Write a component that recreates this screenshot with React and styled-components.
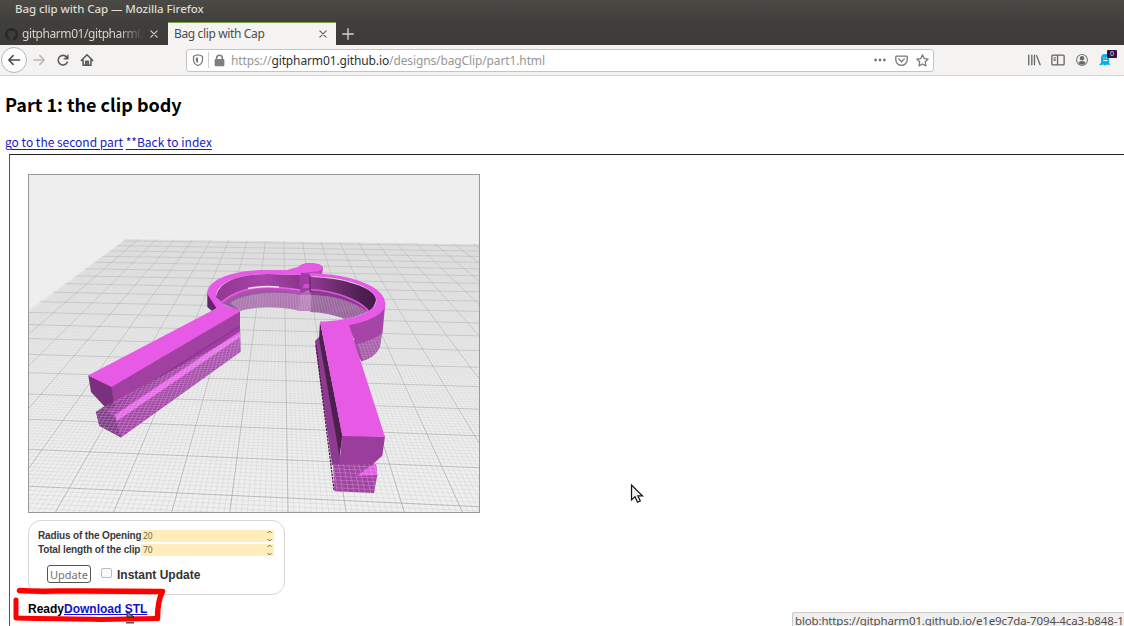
import React from "react";
import styled, { createGlobalStyle } from "styled-components";

const GlobalStyle = createGlobalStyle`
  html, body { margin: 0; padding: 0; background: #fff; overflow: hidden; }
  * { box-sizing: border-box; }
`;

const Window = styled.div`
  position: relative;
  width: 1124px;
  height: 626px;
  overflow: hidden;
  display: flex;
  flex-direction: column;
  background: #fff;
  font-family: "Noto Sans", sans-serif;
`;

const TitleBar = styled.header`
  height: 22px;
  flex: none;
  padding: 0 15px;
  background: linear-gradient(#4b4a45, #403f3b);
  color: #dfdbd2;
  font-size: 11.5px;
  font-weight: 500;
  line-height: 17px;
  letter-spacing: -0.07px;
  white-space: nowrap;
`;

const TabStrip = styled.nav`
  height: 23px;
  flex: none;
  display: flex;
  background: linear-gradient(#403f3b, #3c3b37);
`;

const Tab = styled.div`
  width: ${(p) => p.$width}px;
  display: flex;
  align-items: center;
  padding: ${(p) => (p.$active ? "0 8px 0 6px" : "0 9px 0 5px")};
  background: ${(p) => (p.$active ? "#f5f4f3" : "transparent")};
  border-top: 1px solid ${(p) => (p.$active ? "#78a043" : "transparent")};
  color: ${(p) => (p.$active ? "#4c4c4c" : "#d5d2ca")};
`;

const TabLabel = styled.span`
  flex: 1;
  overflow: hidden;
  white-space: nowrap;
  font-size: 12px;
  line-height: 20px;
  letter-spacing: ${(p) => p.$track};
  margin-left: ${(p) => p.$indent || 0}px;
  margin-right: ${(p) => (p.$fade ? 2 : 8)}px;
  mask-image: ${(p) => (p.$fade ? "linear-gradient(to right, #000 78%, transparent 97%)" : "none")};
`;

const NewTab = styled.div`
  display: flex;
  align-items: center;
  padding-left: 6px;
`;

const Toolbar = styled.div`
  height: 31px;
  flex: none;
  display: flex;
  align-items: center;
  background: #f4f3f2;
  border-bottom: 1px solid #d4d3d2;
`;

const NavButtons = styled.div`
  width: 186px;
  display: flex;
  align-items: center;
`;

const BackButton = styled.div`
  width: 26px;
  height: 26px;
  margin-left: 1px;
  border: 1px solid #b6b5b4;
  border-radius: 50%;
  background: #fdfdfd;
  display: flex;
  align-items: center;
  justify-content: center;
`;

const NavIcon = styled.div`
  width: 24px;
  display: flex;
  justify-content: center;
`;

const UrlBar = styled.div`
  width: 748px;
  height: 23px;
  display: flex;
  align-items: center;
  padding: 0 4px 0 5px;
  border: 1px solid #c6c5c4;
  border-radius: 3px;
  background: #fff;
`;

const Divider = styled.div`
  width: 1px;
  height: 16px;
  margin: 0 4px;
  background: #cdcdcd;
`;

const Url = styled.div`
  flex: 1;
  margin-left: 5px;
  padding-top: 1px;
  font-size: 12px;
  line-height: 18px;
  letter-spacing: -0.12px;
  color: #979797;
  white-space: nowrap;
  b { font-weight: 400; color: #303030; }
`;

const PageActions = styled.div`
  display: flex;
  align-items: center;
  gap: 8px;
`;

const Extensions = styled.div`
  flex: 1;
  display: flex;
  align-items: center;
  justify-content: flex-end;
  gap: 10px;
  padding-right: 11px;
`;

const ExtensionSlot = styled.div`
  position: relative;
  width: 14px;
  height: 14px;
  display: flex;
`;

const Badge = styled.span`
  position: absolute;
  left: 8px;
  top: -3px;
  width: 10px;
  height: 8px;
  background: #3a1140;
  color: #e8dcea;
  border-radius: 1px;
  font-size: 7px;
  line-height: 8px;
  text-align: center;
`;

const Page = styled.main`
  flex: 1;
  padding: 15px 0 0 5px;
  font-family: "Noto Sans CJK JP", "Noto Sans", sans-serif;
`;

const Heading = styled.h1`
  margin: 0;
  height: 26px;
  font-size: 18px;
  line-height: 26px;
  font-weight: 700;
  color: #000;
`;

const Links = styled.p`
  margin: 14px 0 0;
  height: 23px;
  font-size: 12px;
  line-height: 22px;
  white-space: nowrap;
`;

const Anchor = styled.a`
  color: #1a1ac4;
  text-decoration: underline;
  text-underline-offset: 2px;
  text-decoration-thickness: 1px;
`;

const Viewer = styled.section`
  margin-left: 4px;
  height: 480px;
  padding: 19px 0 0 18px;
  border-top: 1px solid #222;
  border-left: 1px solid #555;
  font-family: "Liberation Sans", sans-serif;
`;

const Canvas = styled.div`
  width: 452px;
  height: 339px;
  border: 1px solid #999;
  background: #eee;
  svg { display: block; }
`;

const Controls = styled.form`
  width: 257px;
  height: 75px;
  margin-top: 7px;
  padding: 9px 9px 0;
  border: 1px solid #d6d6d6;
  border-radius: 13px;
`;

const ParamRow = styled.label`
  display: flex;
  height: 13px;
  margin-bottom: 1px;
  color: #3a3a3a;
`;

const ParamName = styled.span`
  width: 103px;
  font-size: 10px;
  line-height: 12px;
  letter-spacing: -0.15px;
  font-weight: 700;
  text-align: right;
  padding-right: 1px;
  white-space: nowrap;
`;

const ParamField = styled.span`
  width: 133px;
  height: 12px;
  display: flex;
  justify-content: space-between;
  align-items: center;
  padding: 0 1px 0 2px;
  background: #ffeebb;
  color: #6e6650;
  font-family: "Noto Sans", sans-serif;
  font-size: 8.5px;
  line-height: 12px;
`;

const Actions = styled.div`
  display: flex;
  align-items: center;
  height: 20px;
  margin-top: 7px;
  padding-left: 9px;
`;

const UpdateButton = styled.span`
  width: 44px;
  height: 18px;
  border: 1px solid #555;
  border-radius: 3px;
  color: #707070;
  font-family: "Noto Sans", sans-serif;
  font-size: 11px;
  line-height: 17px;
  text-align: center;
`;

const CheckBox = styled.span`
  width: 11px;
  height: 10px;
  margin: 0 5px 3px 10px;
  border: 1px solid #bbb;
  border-radius: 2px;
  background: #fafafa;
`;

const CheckLabel = styled.span`
  padding-top: 1px;
  font-size: 12px;
  font-weight: 700;
  color: #333;
`;

const Status = styled.div`
  margin-top: 7px;
  font-size: 12px;
  line-height: 15px;
  font-weight: 700;
  color: #000;
  a { color: #1111cc; text-underline-offset: 1px; }
`;

const LinkPreview = styled.div`
  position: absolute;
  left: 792px;
  top: 612px;
  width: 332px;
  height: 14px;
  padding-left: 2px;
  border: 1px solid #c8c8c8;
  border-width: 1px 0 0 1px;
  border-radius: 3px 0 0 0;
  background: #f0efee;
  color: #505050;
  font-size: 11.5px;
  line-height: 16px;
  letter-spacing: -0.15px;
  white-space: nowrap;
`;

const Overlay = styled.svg`
  position: absolute;
  left: ${(p) => p.$left}px;
  top: ${(p) => p.$top}px;
`;

/* Perspective floor grid */
const VANISH = { x: 282, y: 115 };
const SIDE = { x: -7900, y: 126 };
const columnLine = (i) => ({ x1: VANISH.x, y1: VANISH.y, x2: 288 + i * 58 + (6 + i * 58) * 0.8, y2: 828 });
const rowLine = (k) => {
  const y = 115 + 1 / (0.002611 + k * 0.000288);
  const slope = (y - SIDE.y) / (288 - SIDE.x);
  return { x1: 0, y1: y - 288 * slope, x2: 500, y2: y + 212 * slope };
};
const range = (a, b, step) => Array.from({ length: Math.round((b - a) / step) + 1 }, (_, n) => a + n * step);

function Floor() {
  return (
    <g clipPath="url(#floor)">
      <path d="M126 239L480 244V513H0V334Z" fill="url(#floorShade)" />
      <g stroke="url(#minorLine)" strokeWidth=".45">
        {range(-9, 15, 0.1).map((i) => <line key={"c" + i} {...columnLine(i)} />)}
        {range(-1, 18.3, 0.1).map((k) => <line key={"r" + k} {...rowLine(k)} />)}
      </g>
      <g stroke="url(#majorLine)" strokeWidth=".8">
        {range(-9, 15, 1).map((i) => <line key={"C" + i} {...columnLine(i)} />)}
        {range(-1, 18, 1).map((k) => <line key={"R" + k} {...rowLine(k)} />)}
      </g>
    </g>
  );
}

function ClipModel() {
  return (
    <g>
      {/* knob and ring */}
      <path d="M287 270.5L299 267Q301 263 311 263Q323 264 323 268L322 274L310 277L299 274Z" fill="#b548b5" />
      <path d="M287 270L298 267Q302 263 311 263Q323 264 323 268Q321 272 311 272L302 273Z" fill="#e65ae6" />
      <path d="M207.3 293L207.3 307L212 311L222 305L216 296Z" fill="#63266b" />
      <path d="M382.3 332L380 347Q375 358 361.5 361.5L350 340Q373 340 382.3 332Z" fill="#9a4c9e" />
      <path d="M385.3 303L382.5 333Q375 339 357 344L345 323Z" fill="#a744a7" />
      <path d="M216 297C219 280 242 274 268 274L302 275V294C270 288 244 290 223 304Z" fill="url(#leftWall)" />
      <path d="M310 277C345 278 376 288 376 300Q375 307 369 311C354 299 332 293 310 291Z" fill="url(#rightWall)" />
      <path d="M223 304C240 288 270 288 300 293V311C278 305 255 307 240 311L223 304Z" fill="#985c9c" />
      <path d="M310 293C337 293 358 302 368 311Q360 317 345 319C334 315 322 312 310 312Z" fill="#7f4783" />
      <path d="M300 292L311 291V311H305L299 311Z" fill="#a86bab" />
      <path d="M222 303C240 287 270 286 301 292" fill="none" stroke="#b94bbb" strokeWidth="4" />
      <path d="M222 302C240 286 266 285 300 290" fill="none" stroke="#e463e6" strokeWidth="1.5" />
      <path d="M248 288.500Q262 285.500 279 287" fill="none" stroke="#fbd9fb" strokeWidth="1.500" />
      <path d="M310 291C335 293 355 300 366 312" fill="none" stroke="#8d3791" strokeWidth="4" />
      <path d="M310 289.5C335 291 357 299 368 310" fill="none" stroke="#d759da" strokeWidth="1.5" />
      <path d="M298 272L311 275V290L301 293Z" fill="#9d3da0" />
      <path d="M304 284H310V288H303Z" fill="#d04bd2" />
      <path d="M310 276V292" stroke="#53204f" strokeWidth="1" />
      <path fillRule="evenodd" fill="#e65ae6" d="M207.3 294C207 280 232 270 267 270L287 270L301 272V275L268 274C239 274 216 282 216 297L224 305L240 311L228 316L217 309Z M310 273C350 274 385.3 286 385.3 304C385 315 366 322 349 325L320 322C335 321 346 319 354 317C369 312 376.500 307 376.500 300C374 287 346 276.500 310 276.500Z" />
      {/* left arm */}
      <path d="M96 412L103 407L115 404L240 326L240.7 351.7L121 437.4L99.3 425.7Z" fill="#a045a3" />
      <path d="M96 412L104 407L115 418L121 437.4L99.3 425.7Z" fill="#7b3a84" />
      <path d="M115 415L240 331V337L117 421Z" fill="#e866e8" />
      <path d="M114 405L240 326V331L114 414Z" fill="#a03ca3" />
      <path d="M111 386L240 311V326L114 407Z" fill="#a040a1" />
      <path d="M88.3 375.5L111.5 386L114.5 407L109 410L105 407L91 392Z" fill="#7a307c" />
      <path d="M88 375.5L217 308L232 307L240 311.5L111.5 387Z" fill="#e65ae6" />
      <path d="M114 406L240 326" stroke="#6d2b70" strokeWidth=".7" />
      {/* right arm */}
      <path d="M333 464H376L377.3 475L374 493L334.5 491.3Z" fill="#a042a1" />
      <path d="M357 476L373 464H376L377.3 475Z" fill="#e65ae6" />
      <path d="M315 341L319 337L340 454V465H332L316 350Z" fill="#8e3a91" />
      <path d="M316 345L334 490" stroke="#3d1b40" strokeWidth="1.200" strokeDasharray="2.500 1" />
      <path d="M320 321.5L342.5 436L339.5 456L319 339Z" fill="#4c1f4e" />
      <path d="M342 435.5L385 436.5L382.3 455.7L371.5 465.5H339.3Z" fill="#9b3d9c" />
      <path d="M320 321.5L348.5 323.5L385 437L342.3 436Z" fill="#e65ae6" />
    </g>
  );
}

function Scene() {
  return (
    <svg width="450" height="337" viewBox="29 175 450 337">
      <defs>
        <linearGradient id="floorShade" x1="0" y1="239" x2="0" y2="513" gradientUnits="userSpaceOnUse">
          <stop offset="0" stopColor="#e2e2e2" /><stop offset=".45" stopColor="#ebebeb" /><stop offset="1" stopColor="#f0f0f0" />
        </linearGradient>
        <linearGradient id="minorLine" x1="0" y1="239" x2="0" y2="513" gradientUnits="userSpaceOnUse">
          <stop offset="0" stopColor="#aaa" stopOpacity=".08" /><stop offset=".4" stopColor="#aaa" stopOpacity=".25" /><stop offset="1" stopColor="#a0a0a0" stopOpacity=".42" />
        </linearGradient>
        <linearGradient id="majorLine" x1="0" y1="239" x2="0" y2="513" gradientUnits="userSpaceOnUse">
          <stop offset="0" stopColor="#999" stopOpacity=".36" /><stop offset="1" stopColor="#909090" stopOpacity=".6" />
        </linearGradient>
        <linearGradient id="leftWall"><stop offset="0" stopColor="#92398f" /><stop offset=".25" stopColor="#9a3c9b" /><stop offset=".55" stopColor="#a843aa" /><stop offset="1" stopColor="#8a358b" /></linearGradient>
        <linearGradient id="rightWall"><stop offset="0" stopColor="#903a93" /><stop offset=".75" stopColor="#512052" /><stop offset="1" stopColor="#46194a" /></linearGradient>
        <clipPath id="floor"><path d="M126 239L480 244V513H0V331Z" /></clipPath>
        <clipPath id="submerged">
          <path d="M96 412L104 407L240 334L240.7 351.7L121 437.4L99.3 425.7Z" />
          <path d="M333 464H376L377.3 475L374 493L334.5 491.3Z" />
          <path d="M382.3 332L380 347Q375 358 363 361.5L357 344Q373 340 382.3 333Z" />
          <path d="M230 303C245 292 280 291 300 295L310 295C337 295 358 304 368 312Q360 317 345 319C334 315 322 312 310 312L299 311C278 305 255 307 240 311Z" />
        </clipPath>
      </defs>
      <Floor />
      <ClipModel />
      <g clipPath="url(#submerged)" stroke="#f0d6f2" strokeWidth=".5" opacity=".55">
        {range(-9, 15, 0.1).map((i) => <line key={"c" + i} {...columnLine(i)} />)}
        {range(-1, 18, 0.1).map((k) => <line key={"r" + k} {...rowLine(k)} />)}
      </g>
    </svg>
  );
}

const Glyph = ({ size = 14, color = "#666", width = 1.5, children }) => (
  <svg width={size} height={size} viewBox="0 0 16 16" fill="none" stroke={color} strokeWidth={width} strokeLinecap="round" strokeLinejoin="round">
    {children}
  </svg>
);

const CloseIcon = ({ color }) => (
  <Glyph size={10} color={color} width={2}><path d="M3 3l10 10M13 3L3 13" /></Glyph>
);

const Spinner = () => (
  <svg width="7" height="12" viewBox="0 0 7 12" fill="none" stroke="#77704f" strokeWidth="1">
    <path d="M1.5 3L3.5 1L5.5 3M1.5 9L3.5 11L5.5 9" />
  </svg>
);

const Param = ({ name, value }) => (
  <ParamRow>
    <ParamName>{name}</ParamName>
    <ParamField>{value}<Spinner /></ParamField>
  </ParamRow>
);

const POINTER = "M1.500 1V16L5 12.8L7.500 18.2L10.300 17L7.900 11.8H12.500Z";

export default function App() {
  return (
    <Window>
      <GlobalStyle />
      <TitleBar>Bag clip with Cap — Mozilla Firefox</TitleBar>
      <TabStrip>
        <Tab $width={168}>
          <svg width="13" height="13" viewBox="0 0 16 16" fill="#24292c">
            <path d="M8 0C3.6 0 0 3.6 0 8c0 3.5 2.3 6.500 5.500 7.600.4.1.5-.2.5-.4v-1.500c-2.200.5-2.700-.9-2.700-.9-.4-.9-.9-1.200-.9-1.200-.7-.5.1-.5.1-.5.8.1 1.200.8 1.200.8.7 1.200 1.900.9 2.300.7.1-.5.3-.9.5-1.100-1.800-.2-3.600-.9-3.600-4 0-.9.3-1.600.8-2.100-.1-.2-.4-1 .1-2.100 0 0 .7-.2 2.200.8a7.500 7.500 0 0 1 4 0c1.500-1 2.200-.8 2.200-.8.4 1.100.2 1.900.1 2.100.5.6.8 1.300.8 2.100 0 3.100-1.900 3.700-3.700 3.900.3.300.6.8.6 1.500v2.200c0 .2.1.5.6.4A8 8 0 0 0 8 0z" />
          </svg>
          <TabLabel $fade $indent={4} $track="-0.42px">gitpharm01/gitpharm0</TabLabel>
          <CloseIcon color="#cfccc5" />
        </Tab>
        <Tab $width={168} $active>
          <TabLabel $track="-0.36px">Bag clip with Cap</TabLabel>
          <CloseIcon color="#666" />
        </Tab>
        <NewTab><Glyph size={12} color="#d5d2ca" width={1.8}><path d="M8 1v14M1 8h14" /></Glyph></NewTab>
      </TabStrip>
      <Toolbar>
        <NavButtons>
          <BackButton><Glyph color="#4a4a4a" width={1.7}><path d="M14.500 8H2M7 3L2 8l5 5" /></Glyph></BackButton>
          <NavIcon><Glyph color="#b8b8b8" width={1.7}><path d="M2 8h12M9 3l5 5-5 5" /></Glyph></NavIcon>
          <NavIcon>
            <Glyph color="#5a5a5a" width={1.8}><path d="M13 10.500A5.500 5.500 0 1 1 12.500 5" /><path d="M14 2v5H9z" fill="#5a5a5a" strokeWidth=".6" /></Glyph>
          </NavIcon>
          <NavIcon>
            <Glyph color="#5a5a5a" width={1.8}><path d="M1.500 8.500L8 2l6.500 6.500M3.500 8v6h9V8M8 14v-4" /><path d="M6.500 9.500h3V14h-3z" /></Glyph>
          </NavIcon>
        </NavButtons>
        <UrlBar>
          <Glyph size={12} color="#777" width={1.6}><path d="M8 1L14 3V7.500C14 11.500 11.500 14 8 15.300C4.500 14 2 11.500 2 7.500V3Z" /><path d="M8 4.500V12C6 11 5 9.500 5 7.500V5Z" fill="#777" stroke="none" /></Glyph>
          <Divider />
          <Glyph size={13} color="#808080" width={2}><path d="M4.500 7V5a3.500 3.500 0 0 1 7 0v2" /><path d="M3 7h10v7H3z" fill="#808080" /></Glyph>
          <Url>https://<b>gitpharm01.github.io</b>/designs/bagClip/part1.html</Url>
          <PageActions>
            <Glyph size={14} color="#666" width={0}><g fill="#777"><circle cx="3" cy="8" r="1.600" /><circle cx="8" cy="8" r="1.600" /><circle cx="13" cy="8" r="1.600" /></g></Glyph>
            <Glyph size={13} color="#777" width={1.6}><path d="M2 2.500h12q1 0 1 1V7a7 7 0 0 1-14 0V3.500q0-1 1-1zM4.500 6L8 9.500L11.500 6" /></Glyph>
            <Glyph size={13} color="#777" width={1.5}><path d="M8 1l2.100 4.600 4.900.6-3.600 3.400.9 5L8 12.200l-4.300 2.400.9-5L1 6.200l4.900-.6z" /></Glyph>
          </PageActions>
        </UrlBar>
        <Extensions>
          <Glyph color="#666" width={1.5}><path d="M2 2.500v11M5.500 2.500v11M8.500 2.500v11M11 3l4 10.500" /></Glyph>
          <Glyph color="#666" width={1.5}><path d="M2 2.500h12q1 0 1 1v9q0 1-1 1H2q-1 0-1-1v-9q0-1 1-1zM7.500 2.500v11M3.500 5.500h1.500M3.500 8h1.500" /></Glyph>
          <Glyph color="#777" width={1.2}><circle cx="8" cy="8" r="6.200" /><circle cx="8" cy="6" r="2.500" fill="#666" stroke="none" /><path d="M3.800 11Q5 9 8 9t4.200 2Q10.500 13.300 8 13.300T3.800 11z" fill="#666" stroke="none" /></Glyph>
          <ExtensionSlot>
            <svg width="12" height="13" viewBox="0 0 12 13"><path d="M2 10V5a4 4 0 0 1 8 0v5l1.500 1.500-2 .5-1.500-.5-2 1-2-1-2 .7-2-.7z" fill="#08aef0" /><path d="M4.500 5h1M7 5h1M4.300 7.500h4" stroke="#fff" /></svg>
            <Badge>0</Badge>
          </ExtensionSlot>
        </Extensions>
      </Toolbar>
      <Page>
        <Heading>Part 1: the clip body</Heading>
        <Links><Anchor>go to the second part</Anchor> <Anchor>**Back to index</Anchor></Links>
        <Viewer>
          <Canvas><Scene /></Canvas>
          <Controls>
            <Param name="Radius of the Opening" value="20" />
            <Param name="Total length of the clip" value="70" />
            <Actions>
              <UpdateButton>Update</UpdateButton>
              <CheckBox />
              <CheckLabel>Instant Update</CheckLabel>
            </Actions>
          </Controls>
          <Status>Ready<Anchor>Download STL</Anchor></Status>
        </Viewer>
      </Page>
      <LinkPreview>blob:https://gitpharm01.github.io/e1e9c7da-7094-4ca3-b848-1</LinkPreview>
      <Overlay $left={630} $top={484} width="14" height="21" viewBox="0 0 14 21"><path d={POINTER} fill="#eee" stroke="#111" strokeWidth="1.2" /></Overlay>
      <Overlay $left={0} $top={584} width="180" height="42" viewBox="0 584 180 42" fill="none" stroke="#f00" strokeLinecap="round" strokeLinejoin="round">
        <path d="M19.500 590.500C40 592 60 590.500 84 591L162.500 591.500C158 600 157.500 608 157.500 618.500" strokeWidth="5.500" />
        <path d="M16 600L16 618C50 619 75 618.500 100 619.500L157 618.500" strokeWidth="5" />
      </Overlay>
      <Overlay $left={125} $top={610} width="12" height="14" viewBox="0 0 12 14"><path d="M2 2L9 7H2Z" fill="#888" stroke="#222" /><path d="M1 12.800H9" stroke="#222" strokeWidth="1.200" /></Overlay>
    </Window>
  );
}
